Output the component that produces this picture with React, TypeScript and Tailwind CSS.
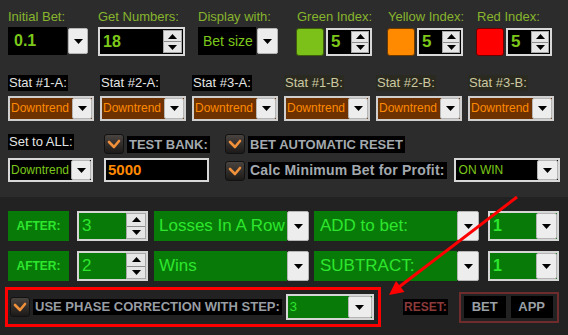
function Tri({ up = false }: { up?: boolean }) {
  return (
    <svg width="9" height="5" viewBox="0 0 9 5">
      <polygon points={up ? "0,5 9,5 4.5,0" : "0,0 9,0 4.5,5"} fill="#000" />
    </svg>
  );
}

function DropBtn({ className = "" }: { className?: string }) {
  return (
    <div className={`flex items-center justify-center bg-[#ededed] border border-[#b5b5b5] rounded-[2px] ${className}`}>
      <Tri />
    </div>
  );
}

function Spin({ className = "" }: { className?: string }) {
  return (
    <div className={`flex flex-col bg-[#e6e6e6] border border-[#a8a8a8] ${className}`}>
      <div className="flex-1 flex items-center justify-center border-b border-[#8c8c8c]">
        <Tri up />
      </div>
      <div className="flex-1 flex items-center justify-center">
        <Tri />
      </div>
    </div>
  );
}

function Check({ className = "" }: { className?: string }) {
  return (
    <div className={`w-5 h-5 rounded-[3px] bg-gradient-to-b from-[#4a4440] to-[#1c1a19] border border-[#121212] flex items-center justify-center ${className}`}>
      <svg width="14" height="12" viewBox="0 0 14 12">
        <polyline points="2,4 7,9 12,3" fill="none" stroke="#f0903a" strokeWidth="2.6" strokeLinecap="round" strokeLinejoin="round" />
      </svg>
    </div>
  );
}

function StatSel({ label, b = false }: { label: string; b?: boolean }) {
  return (
    <div className="flex flex-col w-[86px]">
      <div className="h-4 flex">
        <span className={`px-[1px] text-[13px] leading-4 ${b ? "text-[#cdc9a0] bg-[#2a2a20]" : "text-[#e4e4e4] bg-black"}`}>{label}</span>
      </div>
      <div className="mt-[5px] h-[25px] border-2 border-[#cfcfcf] flex bg-[#6e3200]">
        <span className="flex-1 pl-[1px] text-[12px] leading-[21px] text-[#ff8a00]">Downtrend</span>
        <DropBtn className="w-[20px]" />
      </div>
    </div>
  );
}

function GreenRow({ n, what, op, val }: { n: string; what: string; op: string; val: string }) {
  return (
    <div className="flex h-[30px] items-stretch">
      <div className="w-[61px] bg-[#087a08] flex items-center justify-center text-[12px] font-bold text-[#2ee62e]">AFTER:</div>
      <div className="ml-2 w-[71px] border-2 border-[#d6d6d6] bg-[#087a08] flex">
        <span className="flex-1 pl-[3px] text-[17px] leading-[26px] text-[#2ee62e]">{n}</span>
        <Spin className="w-[20px]" />
      </div>
      <div className="ml-[6px] w-[133px] bg-[#087a08] pl-[5px] text-[17px] leading-[30px] text-[#2ee62e] whitespace-nowrap">{what}</div>
      <DropBtn className="w-[22px]" />
      <div className="ml-[5px] w-[143px] bg-[#087a08] pl-[6px] text-[17px] leading-[30px] text-[#2ee62e] whitespace-nowrap">{op}</div>
      <DropBtn className="w-[22px]" />
      <div className="ml-[9px] w-[71px] border-2 border-[#d6d6d6] bg-[#087a08] flex">
        <span className="flex-1 pl-[3px] text-[16px] font-bold leading-[26px] text-[#2ee62e]">{val}</span>
        <DropBtn className="w-[21px]" />
      </div>
    </div>
  );
}

export default function App() {
  const lbl = "h-4 text-[13px] leading-4 text-[#87b52c] whitespace-nowrap";
  const val = "font-bold text-[#7cc81a]";
  return (
    <div className="relative w-[568px] h-[335px] overflow-hidden bg-[#222222] font-['Liberation_Sans',_Arial,_sans-serif]">
      <div className="h-[197px] bg-[#2c2c2c] pl-2 pt-[9px]">
        {/* row 1 */}
        <div className="flex">
          <div className="w-[90px] flex flex-col">
            <div className={lbl}>Initial Bet:</div>
            <div className="mt-[2px] flex h-[28px] w-[80px]">
              <div className={`w-[59px] bg-black pl-[6px] text-[16px] leading-[28px] ${val}`}>0.1</div>
              <DropBtn className="ml-[1px] w-[20px] my-[1px]" />
            </div>
          </div>
          <div className="w-[100px] flex flex-col">
            <div className={lbl}>Get Numbers:</div>
            <div className="mt-[2px] flex h-[29px] w-[87px] border-2 border-[#d8d8d8] bg-black">
              <span className={`flex-1 pl-[3px] text-[16px] leading-[25px] ${val}`}>18</span>
              <Spin className="w-[19px] my-[1px] mr-[1px]" />
            </div>
          </div>
          <div className="w-[98px] flex flex-col">
            <div className={lbl}>Display with:</div>
            <div className="mt-[2px] flex h-[28px] w-[80px]">
              <div className="w-[58px] bg-black pl-[5px] text-[14px] leading-[28px] text-[#7cc81a] whitespace-nowrap">Bet size</div>
              <DropBtn className="ml-[1px] w-[21px] my-[1px]" />
            </div>
          </div>
          {[
            { l: "Green Index:", c: "bg-[#7cc11a] border-[#3d5e0c]", w: "w-[91px]" },
            { l: "Yellow Index:", c: "bg-[#ff8a00] border-[#6b3a00]", w: "w-[89px]" },
            { l: "Red Index:", c: "bg-[#ff0000] border-[#6a0000]", w: "w-[80px]" },
          ].map((x) => (
            <div key={x.l} className={`${x.w} flex flex-col`}>
              <div className={`${lbl} pl-[1px]`}>{x.l}</div>
              <div className="mt-[3px] flex h-[28px]">
                <div className={`w-[28px] rounded-[3px] border ${x.c}`} />
                <div className="ml-[2px] w-[46px] flex border-2 border-[#d8d8d8] bg-black">
                  <span className={`flex-1 pl-[3px] text-[17px] leading-[24px] ${val}`}>5</span>
                  <Spin className="w-[18px] my-[1px] mr-[1px]" />
                </div>
              </div>
            </div>
          ))}
        </div>

        {/* row 2 */}
        <div className="mt-[19px] flex gap-[6px]">
          <StatSel label="Stat #1-A:" />
          <StatSel label="Stat #2-A:" />
          <StatSel label="Stat #3-A:" />
          <StatSel label="Stat #1-B:" b />
          <StatSel label="Stat #2-B:" b />
          <StatSel label="Stat #3-B:" b />
        </div>

        {/* row 3 */}
        <div className="mt-[13px] flex">
          <div className="w-[96px] flex flex-col">
            <div className="h-4 flex">
              <span className="px-[1px] bg-black text-[13px] leading-4 text-[#e4e4e4]">Set to ALL:</span>
            </div>
            <div className="mt-2 h-[24px] w-[85px] border-2 border-[#d8d8d8] bg-black flex">
              <span className="flex-1 pl-[1px] text-[12px] leading-[20px] text-[#7cc81a]">Downtrend</span>
              <DropBtn className="w-[20px]" />
            </div>
          </div>
          <div className="w-[121px] flex flex-col">
            <div className="flex items-center h-5">
              <Check />
              <span className="ml-[3px] bg-black px-[2px] text-[13px] font-bold leading-[17px] text-[#a3a9ae]">TEST BANK:</span>
            </div>
            <div className="mt-1 h-[24px] w-[105px] border-2 border-[#d8d8d8] bg-black pl-[2px] text-[15px] font-bold leading-[20px] text-[#ff8a00]">5000</div>
          </div>
          <div className="flex flex-col">
            <div className="flex items-center h-5">
              <Check />
              <span className="ml-[3px] bg-black px-[2px] text-[13px] font-bold leading-[17px] text-[#a3a9ae] whitespace-nowrap">BET AUTOMATIC RESET</span>
            </div>
            <div className="mt-1 flex items-center">
              <Check className="mt-[2px]" />
              <span className="ml-[3px] bg-black px-[2px] text-[14px] font-bold leading-[17px] tracking-[0.2px] text-[#a3a9ae] whitespace-nowrap">Calc Minimum Bet for Profit:</span>
              <div className="ml-[7px] h-[24px] w-[106px] border-2 border-[#d8d8d8] bg-black flex">
                <span className="flex-1 pl-[3px] text-[12px] leading-[20px] text-[#7cc81a]">ON WIN</span>
                <DropBtn className="w-[21px]" />
              </div>
            </div>
          </div>
        </div>
      </div>

      {/* green section */}
      <div className="pl-2 pt-[14px] flex flex-col gap-[10px]">
        <GreenRow n="3" what="Losses In A Row" op="ADD to bet:" val="1" />
        <GreenRow n="2" what="Wins" op="SUBTRACT:" val="1" />
      </div>

      {/* bottom row */}
      <div className="mt-[6px] ml-[5px] flex items-center">
        <div className="w-[376px] h-[40px] border-[3px] border-[#ff0000] flex items-center pl-[2px]">
          <Check />
          <span className="ml-[3px] bg-black px-[2px] text-[13px] font-bold leading-[16px] text-[#989da3] whitespace-nowrap">USE PHASE CORRECTION WITH STEP:</span>
          <div className="ml-[4px] h-[26px] w-[88px] border-2 border-[#d6d6d6] bg-[#087a08] flex">
            <span className="flex-1 pl-[2px] text-[13px] leading-[22px] text-[#2ee62e]">3</span>
            <DropBtn className="w-[24px]" />
          </div>
        </div>
        <span className="ml-[22px] bg-black px-[1px] text-[12px] font-bold leading-[16px] text-[#8c3a3a]">RESET:</span>
        <div className="ml-[11px] h-[31px] w-[100px] border-2 border-[#6e2c2c] flex items-center gap-[5px] px-[3px]">
          <div className="w-[42px] h-[22px] bg-black text-center text-[13px] font-bold leading-[22px] text-[#9aa0a6]">BET</div>
          <div className="w-[42px] h-[22px] bg-black text-center text-[13px] font-bold leading-[22px] text-[#9aa0a6]">APP</div>
        </div>
      </div>

      {/* annotation arrow */}
      <svg className="absolute left-0 top-0 pointer-events-none" width="568" height="335" viewBox="0 0 568 335">
        <line x1="517" y1="197" x2="399" y2="287" stroke="#ff0000" strokeWidth="3" />
        <polygon points="389,295 404.5,292 396,281" fill="#ff0000" />
      </svg>
    </div>
  );
}
